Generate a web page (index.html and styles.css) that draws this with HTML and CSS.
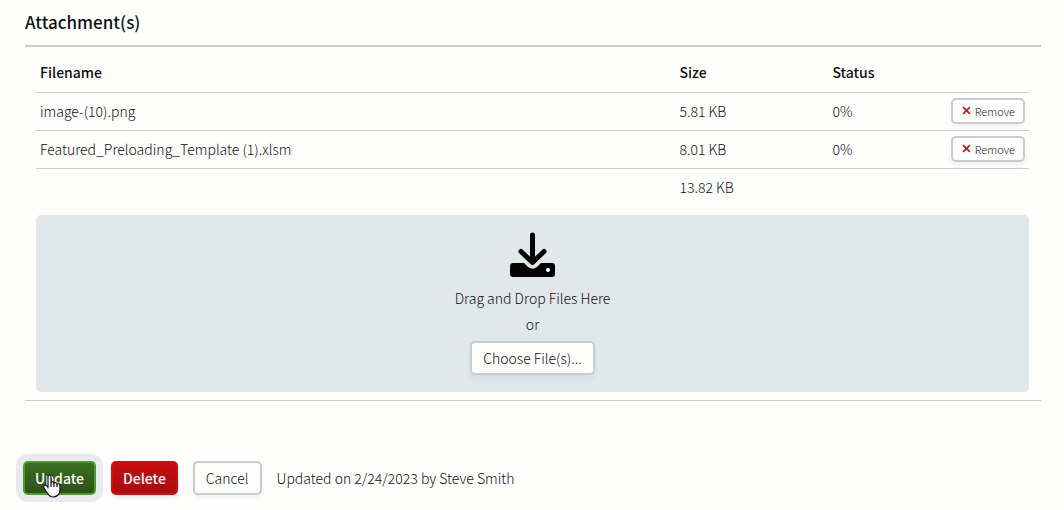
FILE: index.html
```html
<!DOCTYPE html>
<html lang="en">
  <head>
    <meta charset="UTF-8" />
    <meta name="viewport" content="width=device-width, initial-scale=1.0" />
    <title>Attachment(s)</title>
    <link rel="stylesheet" href="styles.css">
  </head>
  <body>
    <form class="page">
      <!-- Attachments -->
      <section class="attachments">
        <h2>Attachment(s)</h2>
        <div class="panel">
          <table class="files">
            <colgroup>
              <col class="col-name" />
              <col class="col-size" />
              <col class="col-status" />
              <col />
            </colgroup>
            <thead>
              <tr>
                <th>Filename</th>
                <th>Size</th>
                <th>Status</th>
                <th></th>
              </tr>
            </thead>
            <tbody>
              <tr>
                <td>image-(10).png</td>
                <td>5.81 KB</td>
                <td>0%</td>
                <td class="action">
                  <button type="button" class="button small">
                    <svg class="x-icon" viewBox="0 0 8 8" aria-hidden="true"><path d="M1 1l6 6M7 1L1 7" /></svg>
                    Remove
                  </button>
                </td>
              </tr>
              <tr>
                <td>Featured_Preloading_Template (1).xlsm</td>
                <td>8.01 KB</td>
                <td>0%</td>
                <td class="action">
                  <button type="button" class="button small">
                    <svg class="x-icon" viewBox="0 0 8 8" aria-hidden="true"><path d="M1 1l6 6M7 1L1 7" /></svg>
                    Remove
                  </button>
                </td>
              </tr>
            </tbody>
            <tfoot>
              <tr>
                <td></td>
                <td>13.82 KB</td>
                <td></td>
                <td></td>
              </tr>
            </tfoot>
          </table>

          <!-- Drop zone -->
          <div class="drop-zone">
            <svg class="drop-icon" viewBox="0 0 45 45" aria-hidden="true">
              <path d="M3 31h11l4 4q4.500 3.500 9 0l4-4h11q3 0 3 3v8q0 3-3 3H3q-3 0-3-3v-8q0-3 3-3z" />
              <path class="arrow" d="M22.500 3v27M11 19.500l11.500 11L34 19.500" />
              <circle class="light" cx="38" cy="38" r="2" />
            </svg>
            <p>Drag and Drop Files Here</p>
            <p>or</p>
            <button type="button" class="button">Choose File(s)...</button>
          </div>
        </div>
      </section>

      <!-- Form actions -->
      <div class="actions">
        <button type="button" class="button update">
          Update
          <svg class="pointer" viewBox="0 0 18 24" aria-hidden="true">
            <path d="M5 14V3q0-2 1.500-2T8 3v5q2-1 3 1 2-1 3 1 3-1 3 2v4q0 3-2 5-2 2-5 2-3 0-5-3l-4-6q-1-3 1-3 1 0 3 2z" />
            <path d="M8 8v5M11 9v4M14 10v3" />
          </svg>
        </button>
        <button type="button" class="button delete">Delete</button>
        <button type="button" class="button">Cancel</button>
        <span>Updated on 2/24/2023 by Steve Smith</span>
      </div>
    </form>
  </body>
</html>
```

FILE: styles.css
```css
body {
  margin: 0;
  background-color: #fefffd;
  color: #111;
  font-family: "Noto Sans CJK SC", "Open Sans", sans-serif;
  font-size: 14px;
  font-weight: 300;
  line-height: 20px;
}
.page {
  padding: 9px 23px 12px;
}
.attachments {
  margin: 0 0 0 2px;
  border-bottom: 1px solid #ccc;
  padding-bottom: 8px;
}
h2 {
  margin: 0;
  padding-bottom: 10px;
  border-bottom: 2px solid #ccc;
  color: #111;
  font-size: 17px;
  font-weight: 500;
  line-height: 26px;
}
.panel {
  padding: 7px 12px 0 11px;
}
.files {
  width: 100%;
  table-layout: fixed;
  border-collapse: collapse;
}
.files th,
.files td {
  box-sizing: border-box;
  height: 38px;
  padding: 0 4px 1px;
  text-align: left;
}
.files th {
  color: #111;
  font-weight: 500;
}
.files thead tr,
.files tbody tr {
  border-bottom: 1px solid #ccc;
}
.col-name {
  width: 64.4%;
}
.col-size {
  width: 15.4%;
}
.col-status {
  width: 9%;
}
.files .action {
  text-align: right;
}
.button {
  box-sizing: border-box;
  height: 34px;
  padding: 0 11px;
  border: 2px solid #c8cccd;
  border-radius: 5px;
  background-color: #fefffd;
  box-shadow: 0 3px 5px rgba(40, 70, 90, 0.08);
  color: #111;
  font: inherit;
  cursor: pointer;
}
.button.small {
  display: inline-flex;
  align-items: center;
  gap: 4px;
  height: 26px;
  padding: 0 8px 0 9px;
  color: #222;
  font-size: 11px;
  vertical-align: middle;
}
.x-icon {
  width: 9px;
  height: 9px;
  fill: none;
  stroke: #b92025;
  stroke-width: 1.6;
}
.drop-zone {
  display: flex;
  flex-direction: column;
  align-items: center;
  margin-top: 9px;
  padding: 17px 0;
  border-radius: 5px;
  background-color: #e2e8ea;
}
.drop-icon {
  width: 45px;
  height: 45px;
  margin-bottom: 11px;
}
.drop-icon .arrow {
  fill: none;
  stroke: #000;
  stroke-width: 5;
  stroke-linecap: round;
  stroke-linejoin: round;
}
.drop-icon .light {
  fill: #fff;
}
.drop-zone p {
  margin: 0 0 6px;
}
.drop-zone .button {
  margin-top: 1px;
}
.actions {
  display: flex;
  align-items: center;
  gap: 15px;
  margin-top: 60px;
}
.button.update {
  position: relative;
  border-color: #4d9a2b;
  background-image: linear-gradient(#397020, #2b5217);
  box-shadow: 0 0 0 7px #e7ebed;
  color: #fff;
  font-weight: 500;
}
.button.delete {
  border-color: #dc080c;
  background-image: linear-gradient(#c80d10, #aa0d10);
  color: #fff;
  font-weight: 500;
}
.button.update,
.button.delete {
  padding: 0 10px;
}
.pointer {
  position: absolute;
  top: 11px;
  left: 18px;
  width: 18px;
  height: 24px;
  fill: #fff;
  stroke: #111;
  stroke-width: 1.2;
  stroke-linejoin: round;
}
```
